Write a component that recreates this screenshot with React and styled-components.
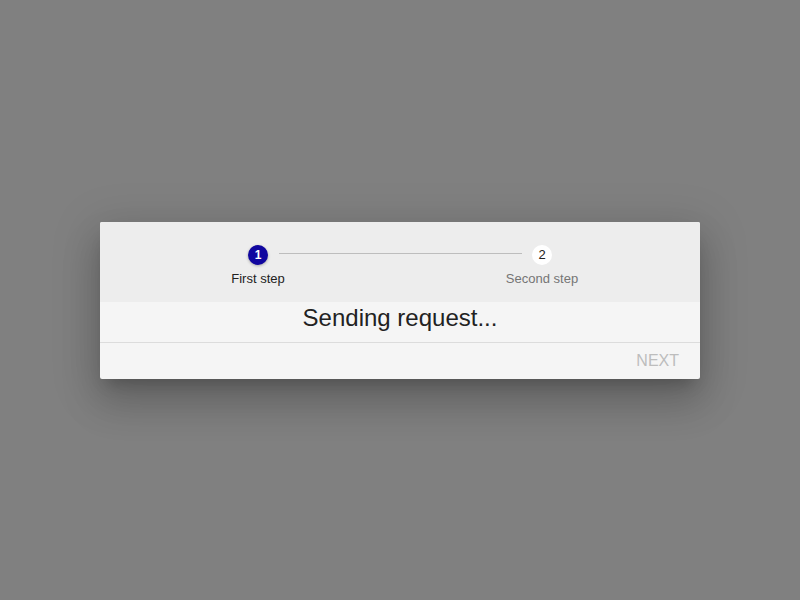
import React from "react";
import styled, { createGlobalStyle } from "styled-components";

const Global = createGlobalStyle`
  html, body { margin: 0; padding: 0; }
  body {
    background: #808080;
    font-family: "Liberation Sans", Arial, sans-serif;
  }
`;

const Page = styled.div`
  height: 600px;
  display: flex;
  align-items: center;
  justify-content: center;
`;

const Card = styled.div`
  width: 600px;
  background: #f5f5f5;
  border-radius: 2px;
  overflow: hidden;
  box-shadow: 0px 11px 15px -7px rgba(0, 0, 0, 0.2),
    0px 24px 38px 3px rgba(0, 0, 0, 0.14), 0px 9px 46px 8px rgba(0, 0, 0, 0.12);
`;

const Header = styled.div`
  background: #ededed;
  padding: 23px 16px 16px;
  display: flex;
  flex-direction: column;
  gap: 6px;
`;

const IconRow = styled.div`
  display: flex;
  align-items: center;
  padding: 0 132px;
`;

const Circle = styled.div`
  width: 20px;
  height: 20px;
  border-radius: 50%;
  flex: none;
  display: flex;
  align-items: center;
  justify-content: center;
  font-size: ${(p) => (p.$active ? "12px" : "13px")};
  font-weight: ${(p) => (p.$active ? 700 : 400)};
  background: ${(p) => (p.$active ? "#10069f" : "#ffffff")};
  color: ${(p) => (p.$active ? "#ffffff" : "#222222")};
  box-shadow: ${(p) =>
    p.$active ? "0 1px 3px rgba(0,0,0,0.3)" : "none"};
`;

const Connector = styled.div`
  flex: 1;
  height: 1px;
  margin: 0 10px 3px 11px;
  background: #bdbdbd;
`;

const LabelRow = styled.div`
  display: grid;
  grid-template-columns: 1fr 1fr;
`;

const Label = styled.div`
  text-align: center;
  font-size: 13px;
  line-height: 15px;
  color: ${(p) => (p.$active ? "#222222" : "#757575")};
`;

const Body = styled.div`
  padding: 2px 0 10px;
  text-align: center;
  font-size: 24px;
  line-height: 28px;
  color: #222222;
  border-bottom: 1px solid #dcdcdc;
`;

const Footer = styled.div`
  height: 36px;
  display: flex;
  align-items: center;
  justify-content: flex-end;
  padding-right: 21px;
`;

const NextButton = styled.span`
  font-size: 16px;
  color: #bdbdbd;
  letter-spacing: 0;
`;

export default function App() {
  return (
    <>
      <Global />
      <Page>
        <Card>
          <Header>
            <IconRow>
              <Circle $active>1</Circle>
              <Connector />
              <Circle>2</Circle>
            </IconRow>
            <LabelRow>
              <Label $active>First step</Label>
              <Label>Second step</Label>
            </LabelRow>
          </Header>
          <Body>Sending request...</Body>
          <Footer>
            <NextButton>NEXT</NextButton>
          </Footer>
        </Card>
      </Page>
    </>
  );
}
